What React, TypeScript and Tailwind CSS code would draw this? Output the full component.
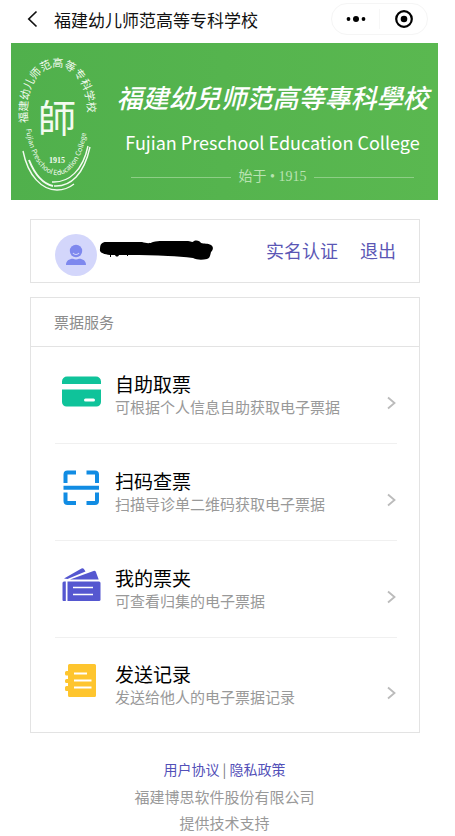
import type { ReactNode } from 'react';

const CardIcon = () => (
  <svg width="40" height="40" viewBox="0 0 40 40" aria-hidden="true">
    <path d="M1 13V10.500a5 5 0 0 1 5-5h29a5 5 0 0 1 5 5V13z" fill="#0fc39a" />
    <path
      d="M1 18.500h39V31a4.500 4.500 0 0 1-4.500 4.500h-30A4.500 4.500 0 0 1 1 31z"
      fill="#0fc39a"
    />
    <rect x="23" y="27.500" width="11" height="3" rx="1.500" fill="#fff" />
  </svg>
);

const ScanIcon = () => (
  <svg width="40" height="40" viewBox="0 0 40 40" aria-hidden="true">
    <g fill="none" stroke="#118ce3" strokeWidth="4">
      <path d="M4.500 15V6.500a2 2 0 0 1 2-2H15M25.500 4.500H34a2 2 0 0 1 2 2V15" />
      <path d="M4.500 24.500V33a2 2 0 0 0 2 2H15M25.500 35H34a2 2 0 0 0 2-2v-8.500" />
      <path d="M2.500 19.800H38" />
    </g>
  </svg>
);

const WalletIcon = () => (
  <svg width="40" height="40" viewBox="0 0 40 40" aria-hidden="true">
    <path d="M3 13.500 20.500 3.500a1.800 1.800 0 0 1 2.400.6L24.500 6.500 6.500 14z" fill="#5557d0" />
    <path d="M9 14.500 32.500 6a2 2 0 0 1 2.500 1.200l2.700 7.300z" fill="#5557d0" />
    <path d="M3 16.500h1.800V36H2.500a1 1 0 0 1-1-1V18a1.500 1.500 0 0 1 1.500-1.500z" fill="#5557d0" />
    <path d="M6.500 16.500H38a1.500 1.500 0 0 1 1.500 1.500v16.500A1.500 1.500 0 0 1 38 36H6.500z" fill="#5557d0" />
    <path d="M12 22.500h20M12 29.500h20" stroke="#fff" strokeWidth="1.500" />
  </svg>
);

const RecordIcon = () => (
  <svg width="40" height="40" viewBox="0 0 40 40" aria-hidden="true">
    <path
      d="M8.500 3h25a1.500 1.500 0 0 1 1.500 1.500v30a1.500 1.500 0 0 1-1.500 1.500h-25A1.500 1.500 0 0 1 7 34.500V30H5.500A1.500 1.500 0 0 1 4 28.500v-2A1.500 1.500 0 0 1 5.500 25H7v-3H5.500A1.500 1.500 0 0 1 4 20.500v-1A1.500 1.500 0 0 1 5.500 18H7v-3.500H5.500A1.500 1.500 0 0 1 4 13v-1.500A1.500 1.500 0 0 1 5.500 10H7V4.500A1.500 1.500 0 0 1 8.500 3z"
      fill="#fec52e"
    />
    <path d="M13 12.500h13M13 19.500h17.500M13 26.500h17.500" stroke="#fff" strokeWidth="2.200" />
  </svg>
);

const serviceList = [
  { title: '自助取票', desc: '可根据个人信息自助获取电子票据', icon: <CardIcon /> },
  { title: '扫码查票', desc: '扫描导诊单二维码获取电子票据', icon: <ScanIcon /> },
  { title: '我的票夹', desc: '可查看归集的电子票据', icon: <WalletIcon /> },
  { title: '发送记录', desc: '发送给他人的电子票据记录', icon: <RecordIcon /> },
];

function NavBar() {
  return (
    <header className="flex h-[43px] items-start pt-[3px] pr-[10px] pl-4">
      <button type="button" aria-label="返回" className="flex h-8 w-[27px] items-center">
        <svg width="12" height="18" viewBox="0 0 12 18" fill="none" stroke="#111" strokeWidth="1.700">
          <path d="M9.500 1.500 1.800 9l7.700 7.500" />
        </svg>
      </button>
      <h1 className="flex-1 text-[17px] leading-[34px] whitespace-nowrap text-[#111]">
        福建幼儿师范高等专科学校
      </h1>
      <div className="flex h-8 w-[97px] items-center rounded-full border border-[#f5f5f5]">
        <button type="button" aria-label="更多" className="flex flex-1 justify-center">
          <svg width="20" height="8" viewBox="0 0 20 8">
            <circle cx="2.500" cy="4" r="1.900" />
            <circle cx="10" cy="4" r="3" />
            <circle cx="17.500" cy="4" r="1.900" />
          </svg>
        </button>
        <span className="h-5 w-px bg-[#f7f7f7]" />
        <button type="button" aria-label="关闭" className="flex flex-1 justify-center">
          <svg width="20" height="20" viewBox="0 0 20 20">
            <circle cx="10" cy="10" r="7.800" fill="none" stroke="#000" strokeWidth="2.200" />
            <circle cx="10" cy="10" r="3.300" />
          </svg>
        </button>
      </div>
    </header>
  );
}

function Emblem() {
  return (
    <svg width="92" height="157" viewBox="0 0 92 157" className="shrink-0" fill="#f3fbf0">
      <defs>
        <path id="sealTop" d="M17 80C13 45 28 24 46 24s34 21 30 58" />
        <path id="sealBottom" d="M15 86C19 115 32 132 46 132s27-17 30-49" />
      </defs>
      <text fontSize="11" className="font-['Noto_Sans_CJK_SC',sans-serif]">
        <textPath href="#sealTop">福建幼儿师范高等专科学校</textPath>
      </text>
      <text x="46" y="89" fontSize="38" textAnchor="middle" className="font-['Noto_Sans_CJK_TC',sans-serif]">
        師
      </text>
      <text x="46" y="120" fontSize="8" fontWeight="700" textAnchor="middle" className="font-['Liberation_Serif',serif]">
        1915
      </text>
      <text fontSize="7" className="font-['Noto_Sans_CJK_SC',sans-serif]">
        <textPath href="#sealBottom">Fujian Preschool Education College</textPath>
      </text>
      <g fill="none" stroke="#f3fbf0" strokeWidth="1.400">
        <path d="M12 108C17 133 31 147 46 147c7 0 12-2 17-6" />
        <path d="M18 117c6 15 15 24 24 26" strokeWidth="2" />
        <path d="M41 139c17 1 31-12 36-36" />
        <path d="M43 143c17 1 30-12 36-39" />
      </g>
    </svg>
  );
}

function Banner() {
  return (
    <div className="flex h-[157px] overflow-hidden bg-linear-to-r from-[#50b04c] to-[#5ab850] text-white">
      <Emblem />
      <div className="flex min-w-0 flex-1 flex-col items-center pt-8 pr-1 pl-2">
        <p className="text-[26px] leading-[44px] font-medium whitespace-nowrap italic">
          福建幼兒师范高等專科學校
        </p>
        <p className="text-lg leading-[46px] whitespace-nowrap">
          Fujian Preschool Education College
        </p>
        <div className="flex w-full items-center gap-2 px-5 leading-6 text-[#b9e3b2]">
          <span className="h-px flex-1 bg-[#8dce86]" />
          <span className="font-['Liberation_Serif','Noto_Sans_CJK_SC',serif] text-sm leading-6">
            始于 • 1915
          </span>
          <span className="h-px flex-1 bg-[#8dce86]" />
        </div>
      </div>
    </div>
  );
}

function UserCard() {
  return (
    <section className="flex h-16 items-start border border-[#e3e3e3] pr-[23px] pl-6">
      <svg width="42" height="42" viewBox="0 0 42 42" className="mt-[14px] shrink-0" role="img" aria-label="头像">
        <circle cx="21" cy="21" r="21" fill="#d3d6fb" />
        <circle cx="21" cy="17" r="6.200" fill="#7e88ee" />
        <path d="M11 31c0-4 3-6.200 7-6.200 2 1 4 1 6 0 4 0 7 2.200 7 6.200z" fill="#7e88ee" />
        <path d="M18 19c1.500 2 4.500 2 6 0" fill="none" stroke="#d3d6fb" strokeWidth="1.200" />
      </svg>
      <svg width="116" height="22" viewBox="0 0 116 22" className="mt-5 ml-[2px] shrink-0">
        <path d="M1 9C1 4 3 2 7 2h36c4 1 7 2 11 0 3-1 6-1 9-1h26c3 0 4 2 6 0 3-1 6 0 7 2 3 1 7 0 10 2 3 2 2 5 0 7-1 4-1 6-4 7-5 1-10 1-14-1-8-1-17-2-25-2-13-1-26-1-38-1h-2v1h-1v-1h-8c-1 2-3 2-4 0h-4v2h-1v-2C5 14 0 13 1 9z" />
      </svg>
      <nav className="ml-auto flex gap-[22px] text-lg leading-[60px] whitespace-nowrap text-[#5b57b5]">
        <a href="#verify">实名认证</a>
        <a href="#logout">退出</a>
      </nav>
    </section>
  );
}

type ServiceRowProps = {
  title: string;
  desc: string;
  icon: ReactNode;
};

function ServiceRow({ title, desc, icon }: ServiceRowProps) {
  return (
    <li className="h-[97px] border-b border-[#f0f0f0] last:h-[94px] last:border-b-0">
      <button type="button" className="flex h-full w-full items-center pl-[6px] text-left">
        <span className="-mt-2 shrink-0">{icon}</span>
        <span className="ml-[14px] flex-1">
          <span className="block text-[19px] leading-6 text-black">{title}</span>
          <span className="block text-[15px] leading-[22px] text-[#999]">{desc}</span>
        </span>
        <svg width="12" height="14" viewBox="0 0 12 14" fill="none" stroke="#bbb" strokeWidth="1.800" className="mt-4">
          <path d="M3 1.500 9.500 7 3 12.500" />
        </svg>
      </button>
    </li>
  );
}

export default function App() {
  return (
    <div className="bg-white pr-[17px] pl-[11px] font-['Noto_Sans_CJK_SC',sans-serif]">
      <NavBar />
      <Banner />
      <main className="flex flex-col gap-[14px] pt-[19px] pr-[18px] pl-[19px]">
        <UserCard />
        <section className="border border-[#e3e3e3]">
          <h2 className="border-b border-[#e3e3e3] pl-[23px] text-[15px] leading-[48px] text-[#8c8c8c]">
            票据服务
          </h2>
          <ul className="pr-[22px] pl-6">
            {serviceList.map(service => (
              <ServiceRow key={service.title} {...service} />
            ))}
          </ul>
        </section>
      </main>
      <footer className="pt-[21px] text-center text-[15px] leading-[26px] text-[#999]">
        <p className="text-sm leading-[30px] text-[#777]">
          <a href="#agreement" className="text-[#5350b8]">
            用户协议
          </a>{' '}
          |{' '}
          <a href="#privacy" className="text-[#5350b8]">
            隐私政策
          </a>
        </p>
        <p>福建博思软件股份有限公司</p>
        <p>提供技术支持</p>
      </footer>
    </div>
  );
}
